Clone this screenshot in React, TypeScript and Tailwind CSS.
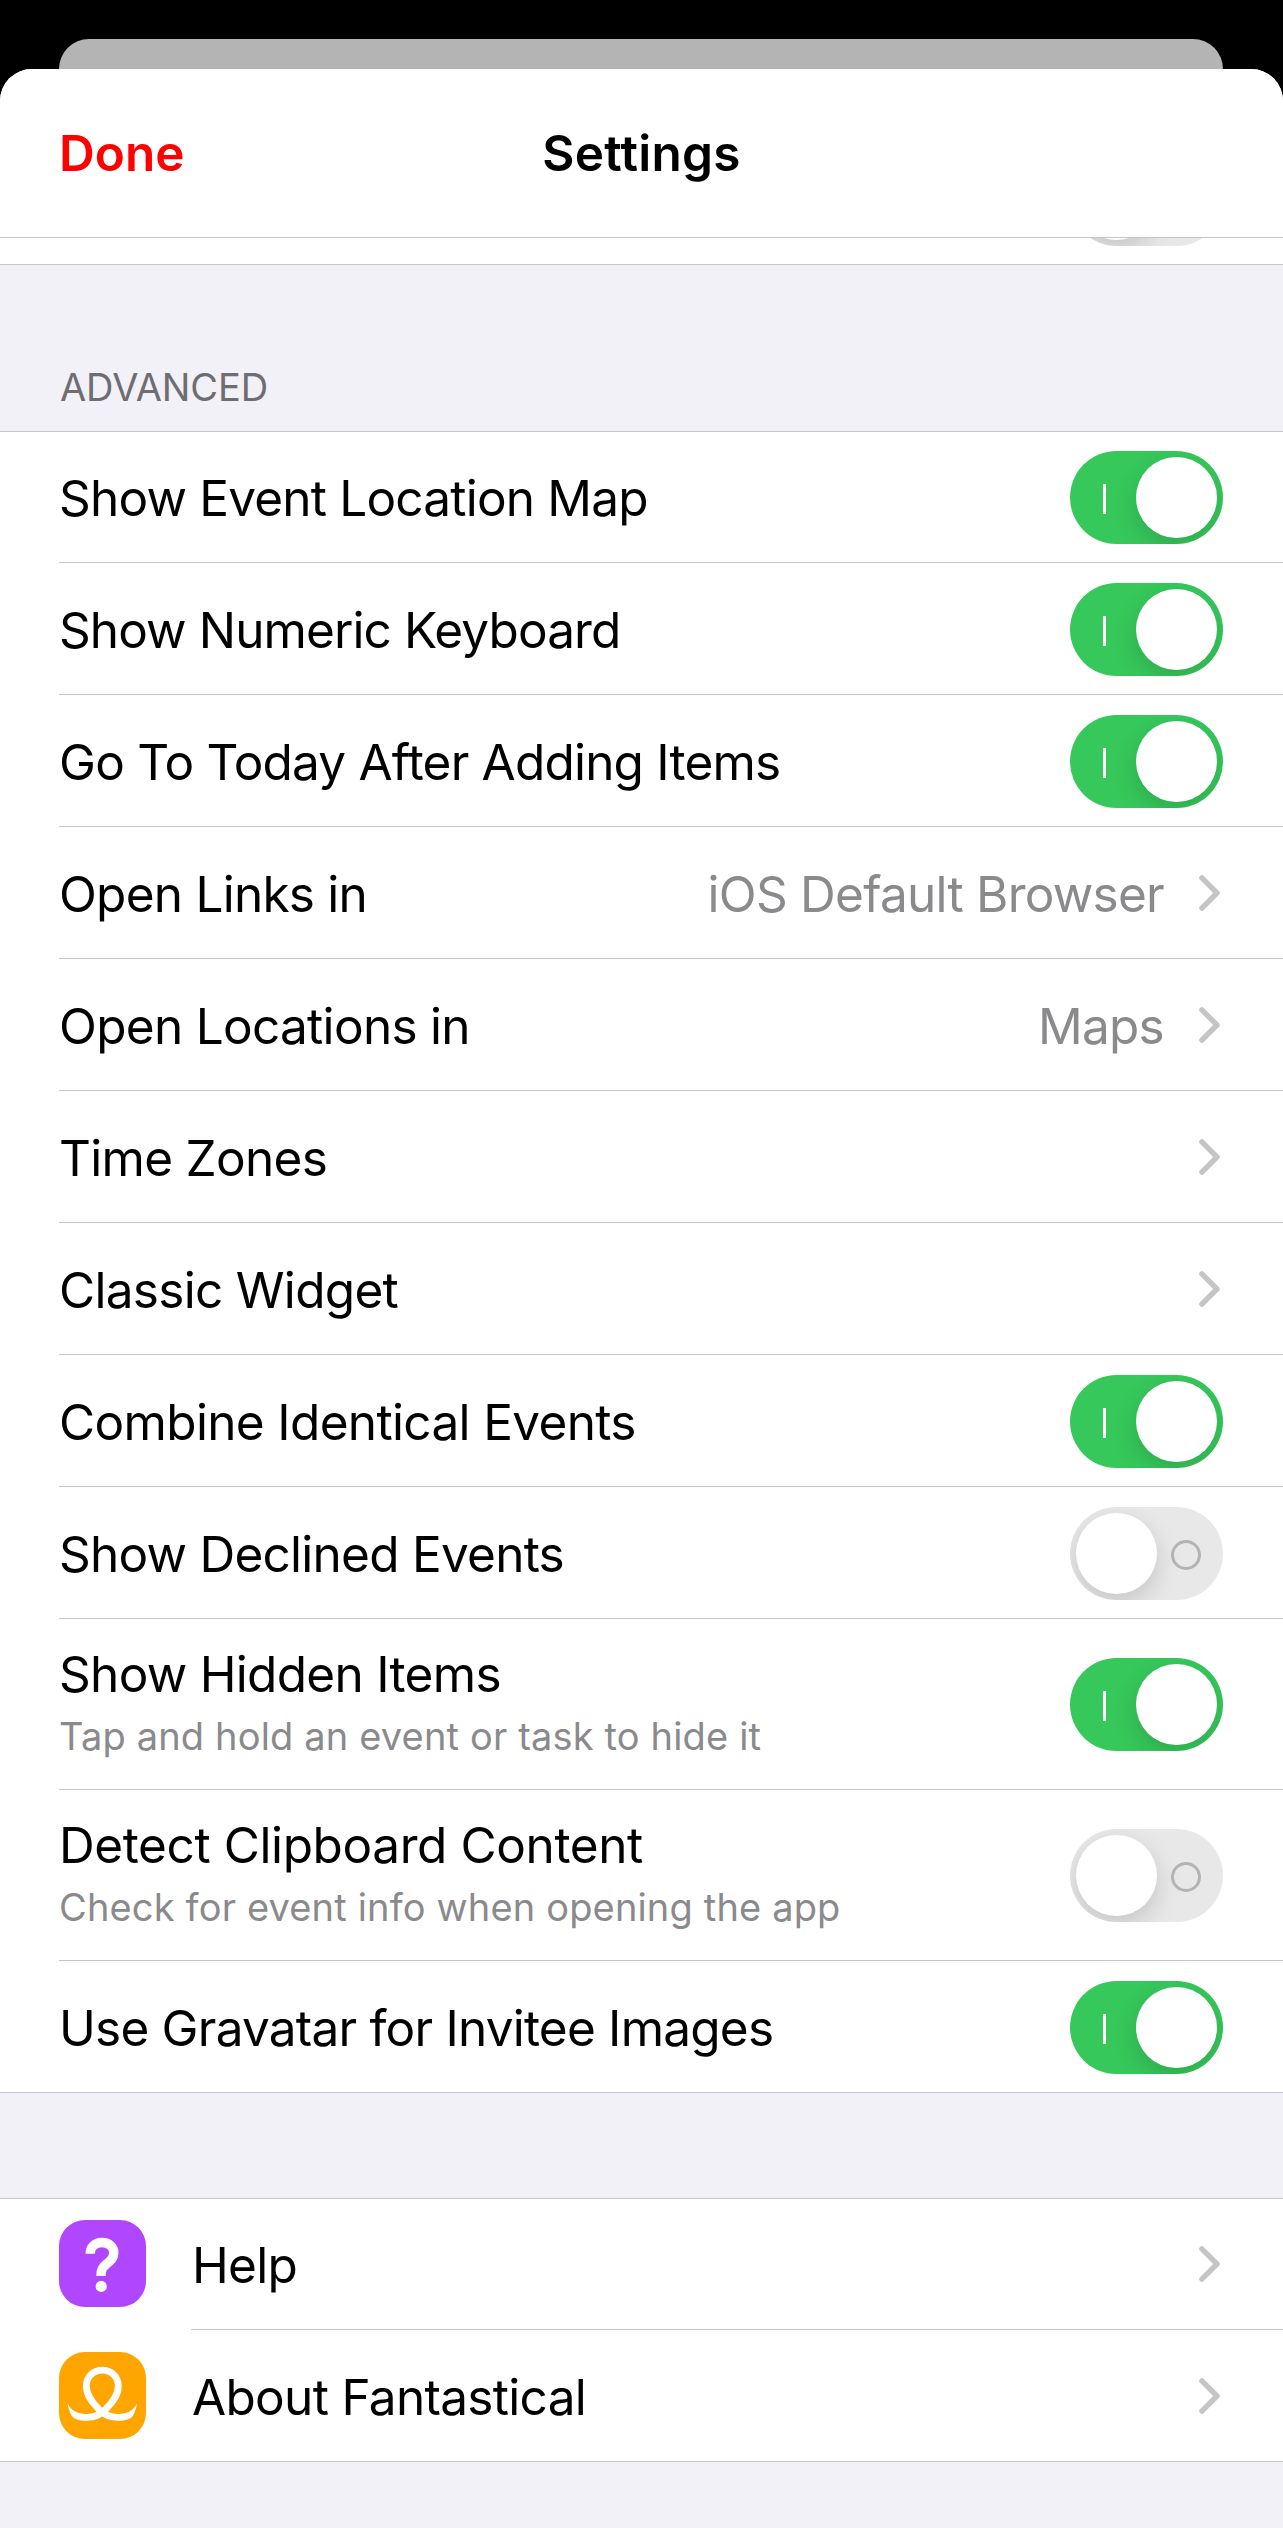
import React from 'react';
import { clsx } from 'clsx';

type SettingRow = {
  label: string;
  hint?: string;
  on?: boolean;
  value?: string;
  tracking?: string;
};

const advancedRows: SettingRow[] = [
  { label: 'Show Event Location Map', on: true },
  { label: 'Show Numeric Keyboard', on: true, tracking: 'tracking-[-0.9px]' },
  { label: 'Go To Today After Adding Items', on: true },
  { label: 'Open Links in', value: 'iOS Default Browser', tracking: 'tracking-[-0.75px]' },
  { label: 'Open Locations in', value: 'Maps', tracking: 'tracking-[-0.7px]' },
  { label: 'Time Zones', tracking: 'tracking-[-0.7px]' },
  { label: 'Classic Widget', tracking: 'tracking-[-0.7px]' },
  { label: 'Combine Identical Events', on: true, tracking: 'tracking-[-0.65px]' },
  { label: 'Show Declined Events', on: false, tracking: 'tracking-[-0.75px]' },
  {
    label: 'Show Hidden Items',
    hint: 'Tap and hold an event or task to hide it',
    on: true,
    tracking: 'tracking-[-0.7px]',
  },
  {
    label: 'Detect Clipboard Content',
    hint: 'Check for event info when opening the app',
    on: false,
    tracking: 'tracking-[-0.4px]',
  },
  { label: 'Use Gravatar for Invitee Images', on: true, tracking: 'tracking-[-0.78px]' },
];

const Toggle: React.FC<{ on: boolean }> = ({ on }) => (
  <div
    role="switch"
    aria-checked={on}
    className={clsx(
      'flex h-[93px] w-[153px] shrink-0 items-center justify-between overflow-hidden rounded-full px-1.5',
      on ? 'bg-[#36c85b]' : 'flex-row-reverse bg-[#e8e8e8]'
    )}
  >
    {on ? (
      <div className="ml-[27px] mt-[3px] h-[30px] w-[3px] bg-white" />
    ) : (
      <div className="mr-4 mt-[3px] size-[30px] rounded-full border-[3px] border-[#b3b3b3]" />
    )}
    <div className="size-[81px] rounded-full bg-white shadow-[0_9px_24px_rgba(0,0,0,0.15)]" />
  </div>
);

const Chevron = () => (
  <svg className="mb-px mr-[3px] h-9 w-[21px] shrink-0" viewBox="0 0 21 36" fill="none">
    <path
      d="M2.9 2.9 L18 18 L2.9 33.1"
      stroke="#c5c5c7"
      strokeWidth="5.4"
      strokeLinecap="round"
      strokeLinejoin="round"
    />
  </svg>
);

const Row: React.FC<{ row: SettingRow; last: boolean }> = ({ row, last }) => (
  <div className={clsx(last && 'border-b border-[#c6c6c8]')}>
    <div
      className={clsx(
        'ml-[59px] flex items-center pr-[60px]',
        row.hint ? 'h-[171px] pt-px' : 'pt-0.5',
        !row.hint && (last ? 'h-[131px]' : 'h-[132px]'),
        !last && 'border-b border-[#c6c6c8]'
      )}
    >
      <div className={clsx('flex-1 whitespace-nowrap', row.hint && 'pb-[5px]')}>
        <div className={clsx('text-[49.5px] leading-[60px]', row.tracking ?? 'tracking-[-0.8px]')}>{row.label}</div>
        {row.hint && (
          <div className="mt-2 text-[38px] leading-[48px] tracking-[0.16px] text-[#8a8a8d]">{row.hint}</div>
        )}
      </div>
      {row.on !== undefined ? (
        <Toggle on={row.on} />
      ) : (
        <>
          {row.value && (
            <span className="mr-[35px] text-[49.5px] leading-[60px] tracking-[-0.75px] text-[#8a8a8d]">{row.value}</span>
          )}
          <Chevron />
        </>
      )}
    </div>
  </div>
);

const HelpIcon = () => (
  <svg className="size-full" viewBox="0 0 87 87" fill="none">
    <path
      d="M31.2 33.7 C31.2 27 36 22.5 43 22.5 C50 22.5 54.8 27 54.8 32.7 C54.8 38.5 51.3 41 47.5 44 C43.5 47.2 42 49.5 42 56"
      stroke="white"
      strokeWidth="9.4"
    />
    <circle cx="42.2" cy="66.4" r="5.6" fill="white" />
  </svg>
);

const LoopIcon = () => (
  <svg className="size-full" viewBox="0 0 87 87" fill="none">
    <path
      d="M26 65.3 C34 65.8 41 63 46 58 C54 50 59.3 43 59.3 34 C59.3 25 52.5 18.2 43.3 18.2 C34.1 18.2 27.3 25 27.3 34 C27.3 43 32.6 50 40.6 58 C45.6 63 52.6 65.8 60.6 65.3"
      stroke="white"
      strokeWidth="6.8"
    />
    <path
      d="M8.7 51.3 C12 59 19 62 27 62 L27 68.7 C20 68.7 15 66.8 12.7 63.9 C10.5 60.5 9.3 56 8.7 51.3 Z"
      fill="white"
    />
    <path
      d="M77.9 51.3 C74.6 59 67.6 62 59.6 62 L59.6 68.7 C66.6 68.7 71.6 66.8 73.9 63.9 C76.1 60.5 77.3 56 77.9 51.3 Z"
      fill="white"
    />
  </svg>
);

const LinkRow: React.FC<{ label: string; tile: string; icon: React.ReactNode; last?: boolean }> = ({
  label,
  tile,
  icon,
  last,
}) => (
  <div className={clsx('flex items-center pl-[59px]', last && 'border-b border-[#c6c6c8]')}>
    <div className={clsx('size-[87px] shrink-0 rounded-[26px]', tile, !last && 'mb-px')}>{icon}</div>
    <div
      className={clsx(
        'ml-[45px] flex flex-1 items-center pr-[60px] pt-0.5',
        last ? 'h-[131px]' : 'h-[132px] border-b border-[#c6c6c8]'
      )}
    >
      <span className="flex-1 pl-px text-[49.5px] leading-[60px] tracking-[-0.68px]">{label}</span>
      <Chevron />
    </div>
  </div>
);

export default function App() {
  return (
    <div className="h-[2528px] w-[1283px] overflow-hidden bg-black font-[Inter,'Liberation_Sans',sans-serif] text-black">
      <div className="ml-[59px] mr-[60px] mt-[39px] h-[30px] rounded-t-[30px] bg-[#b4b4b4]" />

      <div className="h-[2459px] overflow-hidden rounded-t-[32px] bg-[#f2f1f7]">
        <header className="grid h-[169px] grid-cols-3 items-center border-b border-[#c6c6c8] bg-white px-[59px] text-[49.5px] font-semibold leading-[60px]">
          <button className="text-left text-[#ff0000]">Done</button>
          <h1 className="text-center tracking-[0.25px]">Settings</h1>
        </header>

        {/* tail of the previous section, scrolled under the header */}
        <div className="flex h-[27px] items-end justify-end overflow-hidden border-b border-[#c6c6c8] bg-white pb-[18px] pr-[60px]">
          <Toggle on={false} />
        </div>

        <h2 className="flex h-[166px] items-end pb-6 pl-[60px] text-[38px] leading-10 tracking-[-0.1px] text-[#6d6d72]">
          ADVANCED
        </h2>

        <section className="border-t border-[#c6c6c8] bg-white">
          <div className="-mt-px">
            {advancedRows.map((row, i) => (
              <Row key={row.label} row={row} last={i === advancedRows.length - 1} />
            ))}
          </div>
        </section>

        <section className="mt-[105px] border-t border-[#c6c6c8] bg-white">
          <div className="-mt-px">
            <LinkRow label="Help" tile="bg-[#b146ff]" icon={<HelpIcon />} />
            <LinkRow label="About Fantastical" tile="bg-[#ffa500]" icon={<LoopIcon />} last />
          </div>
        </section>
      </div>
    </div>
  );
}
